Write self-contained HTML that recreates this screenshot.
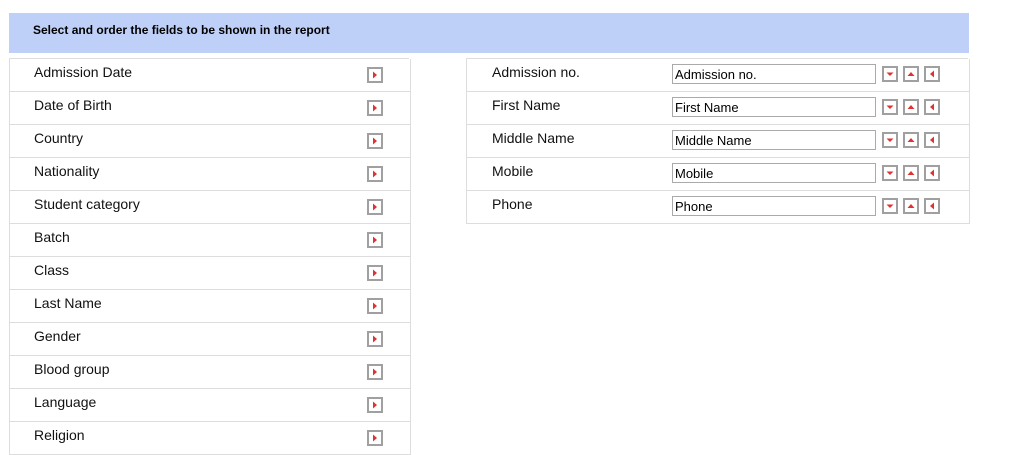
<html><head><style>
body{margin:0;background:#fff;font-family:"Liberation Sans",sans-serif;}
.hdr{position:absolute;left:9px;top:13px;width:960px;height:40px;background:#bfd0f8;}
.hdr span{position:absolute;left:24px;top:10px;font-size:12px;font-weight:bold;color:#000;}
.row{position:absolute;height:32px;border:1px solid #ddd;border-top:none;box-sizing:content-box;}
.row .t{position:absolute;left:24px;top:5px;font-size:14px;color:#111;}
.b{position:absolute;width:12px;height:12px;border:2px solid #a0a0a0;background:#fff;}
.b svg{position:absolute;left:0;top:0}
.inp{position:absolute;left:205px;top:5px;width:200px;height:18px;border:1px solid #aaa;font-size:13px;line-height:19px;padding-left:2px;}
</style></head><body>
<div class="hdr"><span>Select and order the fields to be shown in the report</span></div>
<div style="position:absolute;left:9px;top:58px;width:400px;height:1px;background:#ddd"></div>
<div style="position:absolute;left:466px;top:58px;width:502px;height:1px;background:#ddd"></div>
<div id="L"></div><div id="R"></div>
<script>
var L=["Admission Date","Date of Birth","Country","Nationality","Student category","Batch","Class","Last Name","Gender","Blood group","Language","Religion"];
var R=["Admission no.","First Name","Middle Name","Mobile","Phone"];
var right='<svg width="12" height="12"><path d="M4 2.5L8 6L4 9.5Z" fill="#d33"/></svg>';
var down='<svg width="12" height="12"><path d="M2.5 4.5H9.5L6 8Z" fill="#d33"/></svg>';
var up='<svg width="12" height="12"><path d="M2.5 8H9.5L6 4Z" fill="#d33"/></svg>';
var left='<svg width="12" height="12"><path d="M8 2.5L4 6L8 9.5Z" fill="#d33"/></svg>';
var h='';
L.forEach(function(s,i){h+='<div class="row" style="left:9px;top:'+(59+i*33)+'px;width:400px"><span class="t">'+s+'</span><div class="b" style="left:357px;top:8px">'+right+'</div></div>';});
document.getElementById('L').innerHTML=h;h='';
R.forEach(function(s,i){h+='<div class="row" style="left:466px;top:'+(59+i*33)+'px;width:502px"><span class="t" style="left:25px">'+s+'</span><div class="inp">'+s+'</div><div class="b" style="left:415px;top:7px">'+down+'</div><div class="b" style="left:436px;top:7px">'+up+'</div><div class="b" style="left:457px;top:7px">'+left+'</div></div>';});
document.getElementById('R').innerHTML=h;
</script>
</body></html>
